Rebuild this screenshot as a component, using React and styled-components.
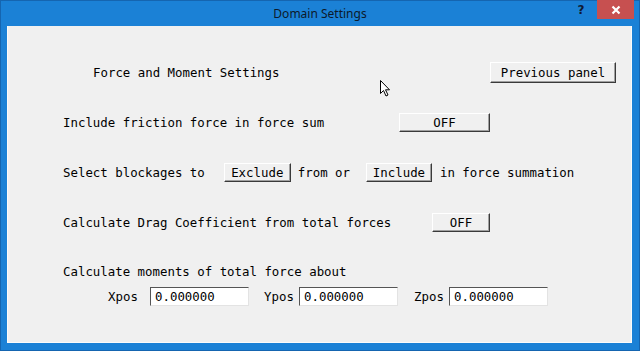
import React from 'react'
import styled, { createGlobalStyle } from 'styled-components'

const Global = createGlobalStyle`
html, body {
  margin: 0;
  padding: 0;
  background: #1b7fd4;
}
`

const Window = styled.div`
position: relative;
width: 640px;
height: 351px;
box-sizing: border-box;
background: #1b81d6;
border: 1px solid #1565b0;
display: flex;
flex-direction: column;
`
const TitleBar = styled.div`
height: 25px;
display: flex;
align-items: center;
justify-content: center;
position: relative;
font-family: "Noto Sans", "Open Sans", sans-serif;
font-size: 12px;
color: #0c1a2b;
`
const TitleText = styled.div`
margin-top: -1px;
`
const Controls = styled.div`
position: absolute;
top: -1px;
right: 5px;
display: flex;
align-items: center;
`
const Help = styled.div`
width: 20px;
font-family: "DejaVu Sans", sans-serif;
font-weight: bold;
font-size: 12px;
color: #101a33;
text-align: center;
margin-right: 6px;
`
const Close = styled.div`
width: 37px;
height: 19px;
background: #c75050;
display: flex;
align-items: center;
justify-content: center;
color: #fff;
`
const Client = styled.div`
flex: 1;
margin: 0 7px 7px 6px;
background: #f0f0f0;
border: 1px solid #fbfbfb;
border-top: 0;
padding: 36px 0 0 55px;
font-family: "DejaVu Sans Mono", "Liberation Mono", monospace;
font-size: 12.4px;
color: #000;
`
const Row = styled.div`
display: flex;
align-items: center;
height: ${p => p.$h || 19}px;
margin-top: ${p => p.$top || 0}px;
white-space: pre;
`
const Label = styled.div`
width: ${p => (p.$w ? p.$w + 'px' : 'auto')};
margin-left: ${p => p.$ml || 0}px;
flex: none;
`
const Button = styled.div`
box-sizing: border-box;
width: ${p => p.$w}px;
height: ${p => p.$h || 19}px;
margin-left: ${p => p.$ml || 0}px;
flex: none;
display: flex;
align-items: center;
justify-content: center;
background: #f0f0f0;
border-top: 1px solid #ffffff;
border-left: 1px solid #ffffff;
border-right: 1px solid #3a3a3a;
border-bottom: 1px solid #3a3a3a;
box-shadow: inset -1px -1px 0 #a0a0a0;
`
const Input = styled.div`
box-sizing: border-box;
width: 99px;
height: 19px;
flex: none;
background: #fff;
border-top: 1px solid #555;
border-left: 1px solid #555;
border-right: 1px solid #e3e3e3;
border-bottom: 1px solid #e3e3e3;
padding-left: 4px;
display: flex;
align-items: center;
`
const Cursor = styled.svg`
position: absolute;
left: 379px;
top: 79px;
`

export default () => (
  <Window>
    <Global />
    <TitleBar>
      <TitleText>Domain Settings</TitleText>
      <Controls>
        <Help>?</Help>
        <Close>
          <svg width="10" height="10" viewBox="0 0 10 10">
            <path d="M1.5 1.5 L8.5 8.5 M8.5 1.5 L1.5 8.5" stroke="#fff" strokeWidth="2.2" />
          </svg>
        </Close>
      </Controls>
    </TitleBar>
    <Client>
      <Row $h={21}>
        <Label $ml={30} $w={397}>Force and Moment Settings</Label>
        <Button $w={126} $h={21}>Previous panel</Button>
      </Row>
      <Row $top={30}>
        <Label $w={336}>Include friction force in force sum</Label>
        <Button $w={91}>OFF</Button>
      </Row>
      <Row $top={31}>
        <Label>Select blockages to</Label>
        <Button $w={67} $ml={19}>Exclude</Button>
        <Label $ml={7}>from or</Label>
        <Button $w={66} $ml={16}>Include</Button>
        <Label $ml={8}>in force summation</Label>
      </Row>
      <Row $top={31}>
        <Label $w={369}>Calculate Drag Coefficient from total forces</Label>
        <Button $w={58}>OFF</Button>
      </Row>
      <Row $top={30} $h={18}>
        <Label>Calculate moments of total force about</Label>
      </Row>
      <Row $top={7}>
        <Label $ml={45} $w={42}>Xpos</Label>
        <Input>0.000000</Input>
        <Label $ml={15} $w={35}>Ypos</Label>
        <Input>0.000000</Input>
        <Label $ml={16} $w={35}>Zpos</Label>
        <Input>0.000000</Input>
      </Row>
    </Client>
    <Cursor width="12" height="18" viewBox="0 0 12 18">
      <path d="M0.5 0.5 L0.5 13.5 L3.5 10.5 L6 16 L8 15 L5.5 9.8 L9.5 9.8 Z" fill="#fff" stroke="#000" strokeWidth="1" />
    </Cursor>
  </Window>
)
